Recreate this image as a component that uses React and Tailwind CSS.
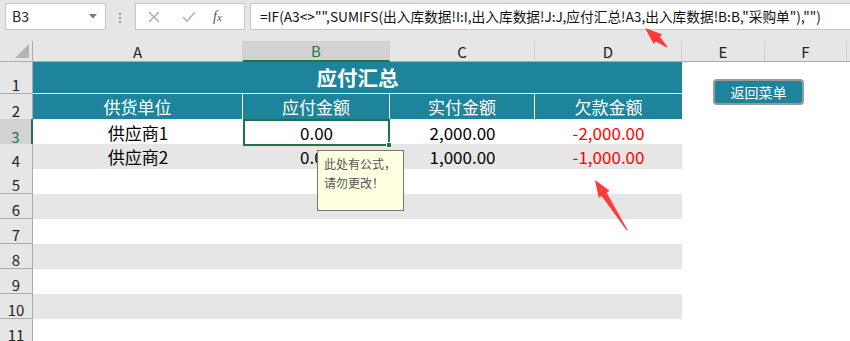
import React from 'react'

const cols = 'grid grid-cols-[33px_210px_147px_145px_147px_83px_82px_1fr]'
const font = { fontFamily: '"Noto Sans CJK SC", "Liberation Sans", sans-serif' }

function RowHead({ n, active }) {
  return (
    <div
      className={
        'flex items-end justify-center border-b border-r pb-[1px] text-[15px] leading-none ' +
        (active
          ? 'bg-[#d2d2d2] text-[#217346] border-b-[#ababab] border-r-2 border-r-[#217346]'
          : 'bg-[#e6e6e6] text-[#222] border-[#ababab]')
      }
    >
      {n}
    </div>
  )
}

function DataRow({ n, gray, a, b, c, d, active }) {
  const bg = gray ? 'bg-[#e7e6e6]' : 'bg-white'
  return (
    <div className={cols + ' h-[25px]'}>
      <RowHead n={n} active={active} />
      <div className={bg + ' flex items-center justify-center text-[17px] text-black'}>{a}</div>
      <div
        className={
          bg +
          ' relative flex items-center justify-center text-[17px] text-black ' +
          (active ? 'border-2 border-[#217346] h-[27px] z-10' : '')
        }
      >
        {b}
        {active && <span className="absolute -right-[4px] -bottom-[4px] h-[6px] w-[6px] border border-white bg-[#217346]" />}
      </div>
      <div className={bg + ' flex items-center justify-center text-[17px] text-black'}>{c}</div>
      <div className={bg + ' flex items-center justify-center text-[17px] text-[#ff0000]'}>{d}</div>
      <div className="bg-white" />
      <div className="bg-white" />
      <div className="bg-white" />
    </div>
  )
}

function Arrow({ x1, y1, x2, y2 }) {
  // x1,y1 tail; x2,y2 tip
  const dx = x2 - x1
  const dy = y2 - y1
  const len = Math.hypot(dx, dy)
  const ux = dx / len
  const uy = dy / len
  const px = -uy
  const py = ux
  const head = 17
  const bx = x2 - ux * head
  const by = y2 - uy * head
  const pts = [
    [x1 - px * 0.6, y1 - py * 0.6],
    [bx - px * 3, by - py * 3],
    [bx - px * 6.5, by - py * 6.5],
    [x2, y2],
    [bx + px * 6.5, by + py * 6.5],
    [bx + px * 3, by + py * 3],
    [x1 + px * 0.6, y1 + py * 0.6],
  ]
  return <polygon points={pts.map((p) => p.join(',')).join(' ')} fill="#ff3b3b" />
}

export default function App() {
  const rows = [
    { n: 3, a: '供应商1', b: '0.00', c: '2,000.00', d: '-2,000.00', active: true },
    { n: 4, a: '供应商2', b: '0.00', c: '1,000.00', d: '-1,000.00' },
    { n: 5 }, { n: 6 }, { n: 7 }, { n: 8 }, { n: 9 }, { n: 10 }, { n: 11 },
  ]
  return (
    <div className="relative h-[341px] w-[850px] overflow-hidden bg-white" style={font}>
      {/* formula bar */}
      <div className="flex h-[41px] items-start bg-[#e6e6e6] pt-[3px] pl-[5px]">
        <div className="flex h-[27px] w-[101px] items-center justify-between border border-[#c6c6c6] bg-white pl-[6px] pr-[8px] text-[14px] text-[#222]">
          <span>B3</span>
          <svg width="8" height="5" viewBox="0 0 8 5"><path d="M0 0h8L4 4.5z" fill="#777" /></svg>
        </div>
        <div className="ml-[13px] mt-[10px] flex flex-col gap-[2px]">
          <span className="h-[2px] w-[2px] bg-[#999]" />
          <span className="h-[2px] w-[2px] bg-[#999]" />
          <span className="h-[2px] w-[2px] bg-[#999]" />
        </div>
        <div className="ml-[14px] flex h-[27px] w-[110px] items-center border border-[#c6c6c6] bg-white pl-[12px]">
          <svg width="12" height="12" viewBox="0 0 12 12"><path d="M1 1l10 10M11 1L1 11" stroke="#a6a6a6" strokeWidth="1.3" /></svg>
          <svg className="ml-[22px]" width="14" height="12" viewBox="0 0 14 12"><path d="M1 6l4 4 8-9" stroke="#b5b5b5" strokeWidth="1.6" fill="none" /></svg>
          <span className="ml-[17px] text-[14px] italic text-[#555]" style={{ fontFamily: '"Liberation Serif", serif' }}>
            f<span className="text-[11px]">x</span>
          </span>
        </div>
        <div className="ml-[5px] flex h-[27px] flex-1 items-center border border-r-0 border-[#c6c6c6] bg-white pl-[9px] text-[13.7px] whitespace-nowrap text-[#111]">
          =IF(A3&lt;&gt;"",SUMIFS(出入库数据!I:I,出入库数据!J:J,应付汇总!A3,出入库数据!B:B,"采购单"),"")
        </div>
      </div>

      {/* column header */}
      <div className={cols + ' h-[21px] bg-[#e6e6e6] text-[15px] leading-none text-[#222]'}>
        <div className="relative border-r border-b border-[#ababab]">
          <svg className="absolute right-[3px] bottom-[3px]" width="14" height="14" viewBox="0 0 14 14"><path d="M14 0v14H0z" fill="#b4b4b4" /></svg>
        </div>
        <div className="flex items-center justify-center border-r border-b border-[#d0d0d0] border-b-[#ababab]">A</div>
        <div className="flex items-center justify-center border-r border-b-2 border-[#d0d0d0] border-b-[#217346] bg-[#d2d2d2] text-[#217346]">B</div>
        <div className="flex items-center justify-center border-r border-b border-[#d0d0d0] border-b-[#ababab]">C</div>
        <div className="flex items-center justify-center border-r border-b border-[#d0d0d0] border-b-[#ababab]">D</div>
        <div className="flex items-center justify-center border-r border-b border-[#d0d0d0] border-b-[#ababab]">E</div>
        <div className="flex items-center justify-center border-r border-b border-[#d0d0d0] border-b-[#ababab]">F</div>
        <div className="border-b border-[#ababab]" />
      </div>

      {/* row 1 */}
      <div className={cols + ' h-[32px]'}>
        <RowHead n={1} />
        <div className="col-span-4 flex items-center justify-center border-b border-white bg-[#1d849b] text-[20.5px] font-bold text-white">
          应付汇总
        </div>
        <div className="relative col-span-3 bg-white">
          <div className="absolute top-[17px] left-[31px] flex h-[26px] w-[91px] items-center justify-center rounded-[4px] border-2 border-[#9a9a9a] bg-[#1d849b] text-[14px] text-white">
            返回菜单
          </div>
        </div>
      </div>

      {/* row 2 */}
      <div className={cols + ' h-[25px]'}>
        <RowHead n={2} />
        <div className="flex items-center justify-center border-r border-white bg-[#1d849b] text-[17px] text-white">供货单位</div>
        <div className="flex items-center justify-center border-r border-white bg-[#1d849b] text-[17px] text-white">应付金额</div>
        <div className="flex items-center justify-center border-r border-white bg-[#1d849b] text-[17px] text-white">实付金额</div>
        <div className="flex items-center justify-center bg-[#1d849b] text-[17px] text-white">欠款金额</div>
        <div />
        <div />
        <div />
      </div>

      {rows.map((r, i) => (
        <DataRow key={r.n} gray={i % 2 === 1} {...r} />
      ))}

      {/* comment */}
      <div className="absolute top-[150px] left-[317px] z-20 h-[61px] w-[87px] border border-[#767676] bg-[#ffffe1] px-[6px] pt-[3px] text-[12px] leading-[19px] text-[#555]">
        此处有公式，
        <br />
        请勿更改！
      </div>

      <svg className="pointer-events-none absolute inset-0 z-30" width="850" height="341">
        <Arrow x1={667} y1={47} x2={645} y2={28} />
        <Arrow x1={627} y1={230} x2={595} y2={180} />
      </svg>
    </div>
  )
}
